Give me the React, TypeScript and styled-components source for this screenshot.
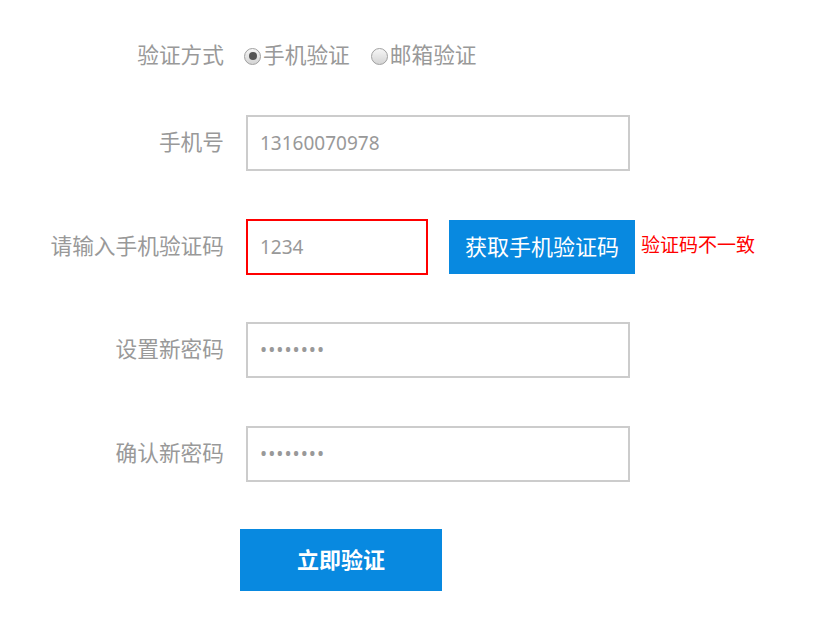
import React, { useState } from 'react';
import styled, { createGlobalStyle } from 'styled-components';

const GlobalStyle = createGlobalStyle`
  html, body {
    margin: 0;
    padding: 0;
    background: #ffffff;
  }
  body {
    font-family: "Noto Sans", "Noto Sans CJK SC", sans-serif;
  }
`;

const App: React.FC = () => {
  const [mode, setMode] = useState<'phone' | 'email'>('phone');
  return (
    <Page>
      <GlobalStyle />
      <Row $space={31}>
        <Label>验证方式</Label>
        <RadioGroup>
          <RadioOption onClick={() => setMode('phone')}>
            <RadioDot $checked={mode === 'phone'} />
            <span>手机验证</span>
          </RadioOption>
          <RadioOption onClick={() => setMode('email')}>
            <RadioDot $checked={mode === 'email'} />
            <span>邮箱验证</span>
          </RadioOption>
        </RadioGroup>
      </Row>

      <Row>
        <Label>手机号</Label>
        <TextInput defaultValue='13160070978' />
      </Row>

      <Row $space={47}>
        <Label>请输入手机验证码</Label>
        <TextInput defaultValue='1234' $width={182} $error />
        <CodeButton type='button'>获取手机验证码</CodeButton>
        <ErrorText>验证码不一致</ErrorText>
      </Row>

      <Row>
        <Label>设置新密码</Label>
        <TextInput type='password' defaultValue='12345678' />
      </Row>

      <Row $space={47}>
        <Label>确认新密码</Label>
        <TextInput type='password' defaultValue='12345678' />
      </Row>

      <SubmitButton type='button'>立即验证</SubmitButton>
    </Page>
  );
};

const Page = styled.div`
  display: flex;
  flex-direction: column;
  padding-top: 28px;
  width: 827px;
`;

const Row = styled.div<{ $space?: number }>`
  display: flex;
  align-items: center;
  height: 56px;
  margin-bottom: ${(p) => (p.$space ?? 48)}px;
`;

const Label = styled.label`
  width: 224px;
  margin-right: 22px;
  padding-bottom: 5px;
  text-align: right;
  font-size: 21.7px;
  color: #999999;
  white-space: nowrap;
`;

const RadioGroup = styled.div`
  display: flex;
  align-items: center;
  gap: 21px;
  margin-left: -2px;
`;

const RadioOption = styled.span`
  display: flex;
  align-items: center;
  gap: 2px;
  font-size: 21.7px;
  color: #999999;
  cursor: pointer;

  & > span {
    padding-bottom: 5px;
  }
`;

const RadioDot = styled.span<{ $checked: boolean }>`
  position: relative;
  flex-shrink: 0;
  box-sizing: border-box;
  width: 17px;
  height: 17px;
  border-radius: 50%;
  border: 1px solid #a0a0a0;
  background: linear-gradient(#f6f6f6, #d4d4d4);

  &::after {
    content: '';
    display: ${(p) => (p.$checked ? 'block' : 'none')};
    position: absolute;
    left: 3.5px;
    top: 3.5px;
    width: 8px;
    height: 8px;
    border-radius: 50%;
    background: #555555;
  }
`;

const TextInput = styled.input<{ $width?: number; $error?: boolean }>`
  box-sizing: border-box;
  width: ${(p) => p.$width ?? 384}px;
  height: 56px;
  padding: 0 12px;
  border: 2px solid ${(p) => (p.$error ? '#ff0000' : '#cccccc')};
  outline: none;
  font-family: "Noto Sans", "Noto Sans CJK SC", sans-serif;
  font-size: 19px;
  color: #999999;
  background: #ffffff;

  &[type='password'] {
    letter-spacing: 1px;
  }
`;

const CodeButton = styled.button`
  width: 186px;
  height: 54px;
  margin-left: 21px;
  padding: 0 0 4px;
  border: none;
  background: #0889e0;
  color: #ffffff;
  font-family: "Noto Sans", "Noto Sans CJK SC", sans-serif;
  font-size: 22px;
  cursor: pointer;
`;

const ErrorText = styled.span`
  margin-left: 6px;
  padding-bottom: 6px;
  font-size: 19px;
  color: #ff0000;
  white-space: nowrap;
`;

const SubmitButton = styled.button`
  width: 202px;
  height: 62px;
  margin-left: 240px;
  padding: 0 0 5px;
  border: none;
  background: #0889e0;
  color: #ffffff;
  font-family: "Noto Sans", "Noto Sans CJK SC", sans-serif;
  font-size: 22px;
  font-weight: bold;
  cursor: pointer;
`;

export default App;
